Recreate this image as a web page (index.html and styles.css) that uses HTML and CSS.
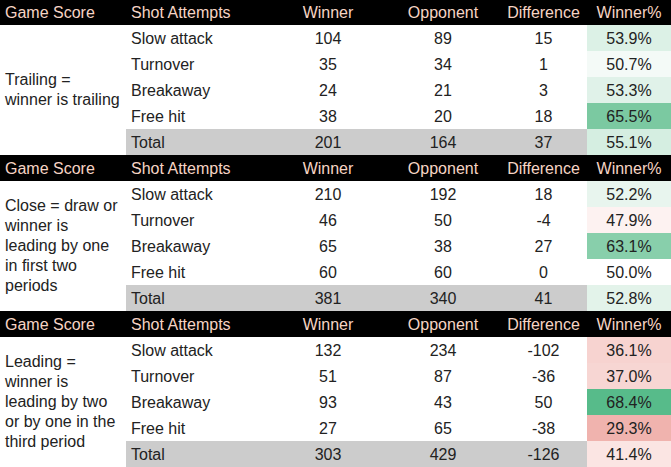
FILE: index.html
```html
<!DOCTYPE html>
<html>
<head>
<meta charset="utf-8">
<link rel="stylesheet" href="styles.css">
</head>
<body>
<table class="sheet">
  <colgroup>
    <col class="c-game"><col class="c-shot"><col class="c-win"><col class="c-opp"><col class="c-diff"><col class="c-pct">
  </colgroup>
  <tbody>
    <tr class="head first">
      <th class="left">Game Score</th><th class="left">Shot Attempts</th><th>Winner</th><th>Opponent</th><th>Difference</th><th>Winner%</th>
    </tr>
    <tr>
      <td class="game" rowspan="5">Trailing = winner is trailing</td>
      <td class="left">Slow attack</td><td>104</td><td>89</td><td>15</td><td class="pct" style="background:#dcf1e6">53.9%</td>
    </tr>
    <tr><td class="left">Turnover</td><td>35</td><td>34</td><td>1</td><td class="pct" style="background:#f4faf7">50.7%</td></tr>
    <tr><td class="left">Breakaway</td><td>24</td><td>21</td><td>3</td><td class="pct" style="background:#e0f2e9">53.3%</td></tr>
    <tr><td class="left">Free hit</td><td>38</td><td>20</td><td>18</td><td class="pct" style="background:#7bc9a1">65.5%</td></tr>
    <tr class="total"><td class="left">Total</td><td>201</td><td>164</td><td>37</td><td class="pct" style="background:#d5eee1">55.1%</td></tr>

    <tr class="head">
      <th class="left">Game Score</th><th class="left">Shot Attempts</th><th>Winner</th><th>Opponent</th><th>Difference</th><th>Winner%</th>
    </tr>
    <tr>
      <td class="game" rowspan="5">Close = draw or winner is leading by one in first two periods</td>
      <td class="left">Slow attack</td><td>210</td><td>192</td><td>18</td><td class="pct" style="background:#e8f5ee">52.2%</td>
    </tr>
    <tr><td class="left">Turnover</td><td>46</td><td>50</td><td>-4</td><td class="pct" style="background:#fdf2f1">47.9%</td></tr>
    <tr><td class="left">Breakaway</td><td>65</td><td>38</td><td>27</td><td class="pct" style="background:#88cfab">63.1%</td></tr>
    <tr><td class="left">Free hit</td><td>60</td><td>60</td><td>0</td><td class="pct" style="background:#ffffff">50.0%</td></tr>
    <tr class="total"><td class="left">Total</td><td>381</td><td>340</td><td>41</td><td class="pct" style="background:#e3f3ea">52.8%</td></tr>

    <tr class="head">
      <th class="left">Game Score</th><th class="left">Shot Attempts</th><th>Winner</th><th>Opponent</th><th>Difference</th><th>Winner%</th>
    </tr>
    <tr>
      <td class="game" rowspan="5">Leading = winner is leading by two or by one in the third period</td>
      <td class="left">Slow attack</td><td>132</td><td>234</td><td>-102</td><td class="pct" style="background:#f7d3d0">36.1%</td>
    </tr>
    <tr><td class="left">Turnover</td><td>51</td><td>87</td><td>-36</td><td class="pct" style="background:#f7d6d3">37.0%</td></tr>
    <tr><td class="left">Breakaway</td><td>93</td><td>43</td><td>50</td><td class="pct" style="background:#57bb8a">68.4%</td></tr>
    <tr><td class="left">Free hit</td><td>27</td><td>65</td><td>-38</td><td class="pct" style="background:#f0b3ae">29.3%</td></tr>
    <tr class="total"><td class="left">Total</td><td>303</td><td>429</td><td>-126</td><td class="pct" style="background:#fbe5e3">41.4%</td></tr>
  </tbody>
</table>
</body>
</html>
```
FILE: styles.css
```css
html, body {
  margin: 0;
  padding: 0;
  background: #ffffff;
}

.sheet {
  border-collapse: collapse;
  table-layout: fixed;
  width: 671px;
  font-family: "Liberation Sans", Arial, sans-serif;
  font-size: 16px;
  color: #222222;
}

.c-game { width: 126px; }
.c-shot { width: 144px; }
.c-win { width: 116px; }
.c-opp { width: 114px; }
.c-diff { width: 87px; }
.c-pct { width: 84px; }

.sheet th,
.sheet td {
  padding: 1px 2px 0;
  height: 26px;
  line-height: 18px;
  text-align: center;
  vertical-align: middle;
  white-space: nowrap;
  font-weight: normal;
  box-sizing: border-box;
}

.sheet tr {
  height: 26px;
}

.sheet tr.first,
.sheet tr.first th {
  height: 25px;
}

.sheet .left {
  text-align: left;
  padding-left: 5px;
}

.head th {
  background: #000000;
  color: #f6d4c4;
}

.sheet td.game {
  white-space: normal;
  text-align: left;
  padding: 0 5px 0 5px;
  line-height: 20px;
  background: #ffffff;
}

.total td {
  background: #cccccc;
}
```
